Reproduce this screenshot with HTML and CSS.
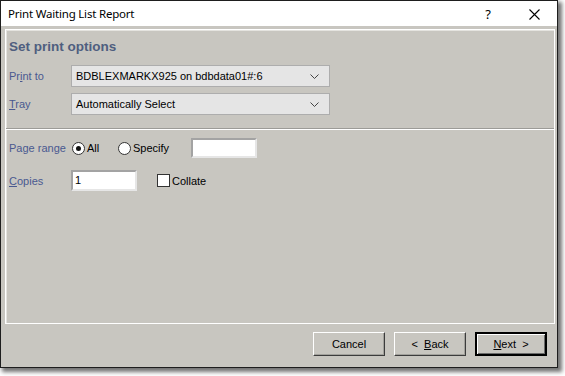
FILE: index.html
```html
<!DOCTYPE html>
<html>
<head>
<meta charset="utf-8">
<link rel="stylesheet" href="styles.css">
</head>
<body>
<div class="window">
  <div class="titlebar">
    <span class="title">Print Waiting List Report</span>
    <span class="tb-btn help">?</span>
    <span class="tb-btn close">
      <svg width="11" height="11" viewBox="0 0 11 11"><path d="M0.5 0.5 L10.5 10.5 M10.5 0.5 L0.5 10.5" stroke="#000" stroke-width="1.1" fill="none"/></svg>
    </span>
  </div>
  <div class="client">
    <div class="panel">
      <div class="section top">
        <div class="heading">Set print options</div>
        <div class="row combo-row">
          <span class="label">Pr<u>i</u>nt to</span>
          <div class="combo"><span>BDBLEXMARKX925 on bdbdata01#:6</span><svg class="chev" width="9" height="5" viewBox="0 0 9 5"><path d="M0.5 0.5 L4.5 4.5 L8.5 0.5" stroke="#444" fill="none"/></svg></div>
        </div>
        <div class="row combo-row second">
          <span class="label"><u>T</u>ray</span>
          <div class="combo"><span>Automatically Select</span><svg class="chev" width="9" height="5" viewBox="0 0 9 5"><path d="M0.5 0.5 L4.5 4.5 L8.5 0.5" stroke="#444" fill="none"/></svg></div>
        </div>
      </div>
      <div class="section bottom">
        <div class="row range-row">
          <span class="label">Page range</span>
          <span class="radio checked"></span><span class="opt all">All</span>
          <span class="radio"></span><span class="opt specify">Specify</span>
          <span class="input short"></span>
        </div>
        <div class="row copies-row">
          <span class="label"><u>C</u>opies</span>
          <span class="input">1</span>
          <span class="check"></span><span class="opt">Collate</span>
        </div>
      </div>
    </div>
    <div class="footer">
      <span class="btn">Cancel</span>
      <span class="btn">&lt;&nbsp;&nbsp;<u>B</u>ack</span>
      <span class="btn default"><u>N</u>ext&nbsp;&nbsp;&gt;</span>
    </div>
  </div>
</div>
</body>
</html>
```
FILE: styles.css
```css
html, body {
  margin: 0;
  padding: 0;
  background: #ffffff;
}
body {
  width: 565px;
  height: 376px;
  overflow: hidden;
  font-family: "Liberation Sans", Arial, sans-serif;
  font-size: 11px;
  color: #000;
}
.window {
  width: 556px;
  height: 366px;
  border: 1px solid #1e1e1e;
  display: flex;
  flex-direction: column;
  box-shadow: 3px 3px 4px 1px rgba(0, 0, 0, 0.55);
  background: #c8c6c0;
}
.titlebar {
  height: 25px;
  background: #fff;
  display: flex;
  align-items: center;
  padding-left: 7px;
}
.title {
  flex: 1;
  font-family: "Noto Sans", sans-serif;
  font-size: 11.5px;
  letter-spacing: -0.2px;
}
.tb-btn {
  width: 46px;
  height: 25px;
  display: flex;
  align-items: center;
  justify-content: center;
  font-family: "Noto Sans", sans-serif;
  font-size: 13px;
}
.close { padding-top: 1px; }
.client {
  flex: 1;
  display: flex;
  flex-direction: column;
  padding: 3px 2px 0 4px;
}
.panel {
  height: 293px;
  border: 1px solid #ffffff;
  box-shadow: inset 1px 1px 0 #e4e3df;
  display: flex;
  flex-direction: column;
}
.section.top {
  height: 98px;
  padding-left: 3px;
  border-bottom: 1px solid #9c9b97;
}
.section.bottom {
  flex: 1;
  border-top: 1px solid #ffffff;
  padding-left: 3px;
}
.heading {
  margin-top: 9px;
  height: 16px;
  line-height: 16px;
  font-weight: bold;
  font-size: 13.5px;
  color: #4f5e7f;
}
.row {
  display: flex;
  align-items: center;
}
.label {
  width: 62px;
  flex: none;
  color: #4a5990;
}
.combo-row { margin-top: 10px; }
.combo-row.second { margin-top: 6px; }
.combo {
  width: 243px;
  height: 20px;
  background: #e5e5e5;
  border: 1px solid #adadad;
  display: flex;
  align-items: center;
  justify-content: space-between;
  padding: 0 10px 0 4px;
  box-sizing: content-box;
}
.combo span { flex: 1; }
.chev { flex: none; }
.range-row {
  margin-top: 8px;
  height: 20px;
}
.radio {
  width: 11px;
  height: 11px;
  border-radius: 50%;
  border: 1px solid #333;
  background: #fff;
  position: relative;
  flex: none;
  margin-left: 1px;
}
.radio.checked::after {
  content: "";
  position: absolute;
  left: 3px;
  top: 3px;
  width: 5px;
  height: 5px;
  border-radius: 50%;
  background: #111;
}
.opt { margin-left: 2px; }
.opt.all { width: 30px; }
.opt.specify { width: 58px; }
.input {
  width: 60px;
  height: 17px;
  background: #fff;
  border: 2px solid;
  border-color: #a3a3a3 #e6e6e6 #e6e6e6 #a3a3a3;
  box-sizing: content-box;
  padding-left: 2px;
  line-height: 17px;
  flex: none;
}
.input.short {
  height: 16px;
}
.copies-row {
  margin-top: 12px;
  height: 21px;
}
.check {
  width: 11px;
  height: 11px;
  border: 1px solid #333;
  background: #fff;
  margin-left: 20px;
  flex: none;
}
.footer {
  flex: 1;
  display: flex;
  justify-content: flex-end;
  align-items: flex-start;
  padding-top: 8px;
  padding-right: 8px;
  gap: 9px;
}
.btn {
  width: 72px;
  height: 24px;
  box-sizing: border-box;
  display: flex;
  align-items: center;
  justify-content: center;
  border-top: 1px solid #fff;
  border-left: 1px solid #fff;
  border-right: 1px solid #3c3c3c;
  border-bottom: 1px solid #3c3c3c;
  box-shadow: inset -1px -1px 0 #a2a19c;
}
.btn.default {
  border: 2px solid #000;
  box-shadow: inset 1px 1px 0 #fff, inset -1px -1px 0 #6a6a6a;
}
```
